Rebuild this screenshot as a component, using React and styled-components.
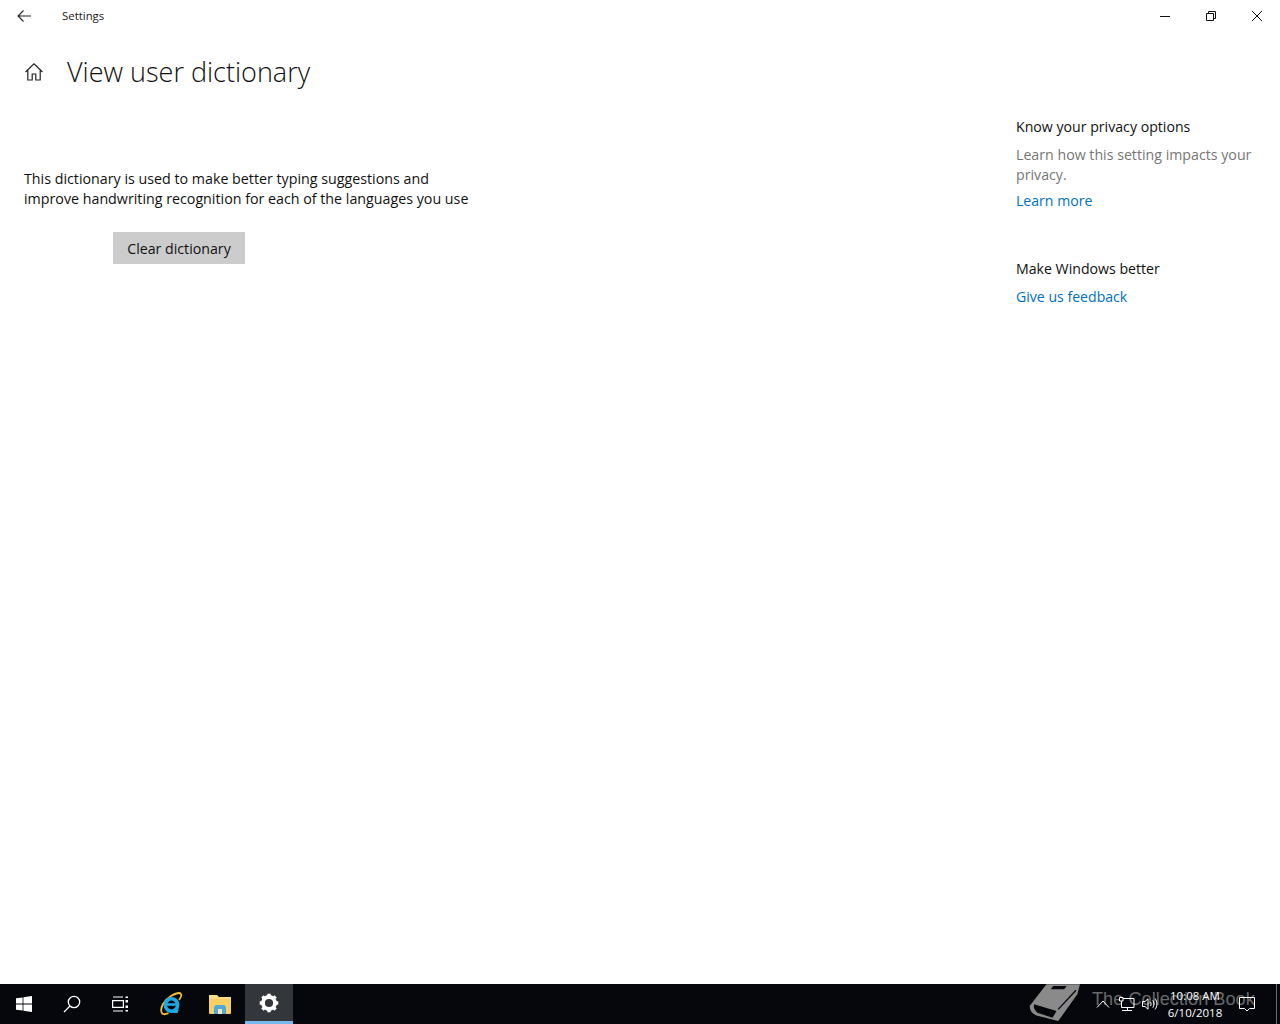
import React from "react";
import styled, { createGlobalStyle } from "styled-components";

const Global = createGlobalStyle`
    html, body {
        margin: 0;
        padding: 0;
        background: #fff;
    }
    body {
        font-family: "Open Sans", "Noto Sans", sans-serif;
    }
`

const Page = styled.div`
    width: 1280px;
    height: 1024px;
    display: flex;
    flex-direction: column;
    overflow: hidden;
`

const TitleBar = styled.div`
    height: 32px;
    display: flex;
    align-items: center;
    flex-shrink: 0;
`

const BackButton = styled.div`
    width: 48px;
    height: 32px;
    display: flex;
    align-items: center;
    justify-content: center;
`

const AppTitle = styled.div`
    margin: 0 0 2px 14px;
    font-size: 11.4px;
    color: #1a1a1a;
    flex: 1;
`

const WindowButton = styled.div`
    width: 46px;
    height: 32px;
    display: flex;
    align-items: center;
    justify-content: center;
`

const Main = styled.div`
    flex: 1;
    display: flex;
    justify-content: space-between;
`

const Content = styled.div`
    padding-left: 24px;
`

const Header = styled.div`
    display: flex;
    align-items: center;
    height: 40px;
    margin-top: 20px;
`

const Title = styled.h1`
    margin: 0 0 2px 23px;
    font-size: 27px;
    font-weight: 300;
    color: #111;
    white-space: nowrap;
`

const Description = styled.p`
    margin: 77px 0 0;
    font-size: 14.25px;
    line-height: 20px;
    color: #111;
    white-space: nowrap;
`

const ClearButton = styled.button`
    display: block;
    margin: 23px 0 0 89px;
    width: 132px;
    height: 32px;
    padding: 0;
    border: 0;
    background: #ccc;
    color: #111;
    font-family: inherit;
    font-size: 14.2px;
`

const Aside = styled.aside`
    width: 264px;
    padding-top: 85px;
`

const AsideSection = styled.section`
    margin-bottom: 48px;
`

const AsideHeading = styled.div`
    font-size: 14.15px;
    line-height: 20px;
    color: #111;
    margin-bottom: 8px;
`

const AsideText = styled.div`
    width: 245px;
    font-size: 14.2px;
    line-height: 20px;
    color: #767676;
    margin-bottom: 6px;
`

const AsideLink = styled.a`
    display: block;
    font-size: 14.1px;
    line-height: 20px;
    color: #0070c0;
`

const TaskBar = styled.div`
    position: relative;
    height: 40px;
    flex-shrink: 0;
    background: #05070c;
    display: flex;
    align-items: stretch;
`

const TaskItem = styled.div`
    width: ${p => p.$width || 48}px;
    padding-left: ${p => p.$inset || 0}px;
    display: flex;
    align-items: center;
    justify-content: center;
    box-sizing: border-box;
    background: ${p => (p.$active ? "#33363a" : "transparent")};
    border-bottom: ${p => (p.$active ? "3px solid #76b9ed" : "0")};
`

const Tray = styled.div`
    margin-left: auto;
    display: flex;
    align-items: center;
    position: relative;
    z-index: 1;
`

const TrayIcon = styled.div`
    width: ${p => p.$width || 24}px;
    display: flex;
    justify-content: center;
    margin-left: ${p => p.$gap || 0}px;
`

const Clock = styled.div`
    width: 74px;
    margin: 0 3px 0 0;
    text-align: center;
    font-size: 11.5px;
    line-height: 17px;
    color: #fff;
`

const ShowDesktop = styled.div`
    width: 1px;
    height: 40px;
    margin: 0 3px 0 17px;
    background: #6b6d70;
`

const Watermark = styled.div`
    position: absolute;
    left: 1028px;
    top: 0;
    height: 40px;
    display: flex;
    color: #68696b;
    font-family: "Liberation Sans", Arial, sans-serif;
    font-size: 18.2px;
    line-height: 30px;
    white-space: nowrap;
    overflow: hidden;
`

const WatermarkText = styled.span`
    margin-left: 12px;
`

const BackIcon = () => <svg width="16" height="16" viewBox="0 0 16 16" fill="none" stroke="#222" strokeWidth="1.1">
    <path d="M2 8h13M7.500 2.500 2 8l5.500 5.500" />
</svg>

const MinimizeIcon = () => <svg width="12" height="12" viewBox="0 0 12 12" stroke="#111" strokeWidth="1">
    <path d="M1 6.500h10" />
</svg>

const RestoreIcon = () => <svg width="12" height="12" viewBox="0 0 12 12" fill="none" stroke="#111" strokeWidth="1">
    <path d="M1.500 3.500h7v7h-7zM3.500 3.500v-2h7v7h-2" />
</svg>

const CloseIcon = () => <svg width="12" height="12" viewBox="0 0 12 12" stroke="#111" strokeWidth="1">
    <path d="M1 1l10 10M11 1 1 11" />
</svg>

const HomeIcon = () => <svg width="20" height="20" viewBox="0 0 20 20" fill="none" stroke="#222" strokeWidth="1.2">
    <path d="M1.500 10 10 1.800 18.500 10M3.800 8v10h4.400v-6h3.600v6h4.400V8" />
</svg>

const WindowsLogo = () => <svg width="16" height="16" viewBox="0 0 16 16" fill="#fff">
    <path d="M0 2.300 6.600 1.400v6.100H0zM7.400 1.300 16 0v7.500H7.400zM0 8.400h6.600v6.200L0 13.700zM7.400 8.400H16V16l-8.600-1.300z" />
</svg>

const SearchIcon = () => <svg width="18" height="18" viewBox="0 0 18 18" fill="none" stroke="#fff" strokeWidth="1.300">
    <circle cx="11" cy="7" r="5.700" />
    <path d="M7 11 1 17" />
</svg>

const TaskViewIcon = () => <svg width="16" height="16" viewBox="0 0 16 16" fill="none" stroke="#fff" strokeWidth="1.200">
    <path d="M.6 4.600h10.800v6.800H.6zM1 1h10M1 15h10" />
    <path d="M13.500.4H16v1.700h-2.500zM13.500 4H16v2.500h-2.500zM13.500 9.500H16V12h-2.500zM13.500 13.900H16v1.700h-2.500z" fill="#fff" stroke="none" />
</svg>

const EdgeIcon = () => <svg width="24" height="24" viewBox="0 0 24 24" fill="none">
    <path d="M2.500 20C1 16 5 8 12 4c5-3 9-3.500 10-2 1 1.300-.5 4-2 6" stroke="#f0c030" strokeWidth="1.800" />
    <path d="M2.500 20c.5 2.500 3 3 7 1" stroke="#f0c030" strokeWidth="1.800" />
    <circle cx="12.500" cy="13" r="6.200" stroke="#1ea7e1" strokeWidth="3.600" />
    <path d="M6 12.500h13.500" stroke="#1ea7e1" strokeWidth="2.600" />
    <path d="M15 17.500h5l-1.500 3.500h-5z" fill="#1ea7e1" />
</svg>

const ExplorerIcon = () => <svg width="22" height="19" viewBox="0 0 22 19">
    <path d="M0 0h8l2 2h12v4H0z" fill="#f7dd84" />
    <path d="M0 4h22v14a1 1 0 0 1-1 1H1a1 1 0 0 1-1-1z" fill="#f8cf62" />
    <path d="M5 13a3 3 0 0 1 3-3h6a3 3 0 0 1 3 3v6H5z" fill="#4fa8dc" />
    <path d="M9 14h4v5H9z" fill="#f8e7ae" />
</svg>

const GearIcon = () => <svg width="20" height="20" viewBox="0 0 20 20" fill="none" stroke="#fff">
    <circle cx="10" cy="10" r="6" strokeWidth="3.800" />
    <path d="M10 .7v3M10 16.300v3M.7 10h3M16.300 10h3M3.400 3.400l2.200 2.200M14.400 14.400l2.200 2.200M16.600 3.400l-2.200 2.200M5.600 14.400l-2.200 2.200" strokeWidth="3.400" />
</svg>

const BookIcon = () => <svg width="52" height="38" viewBox="0 0 155 112" style={{ flexShrink: 0 }}>
    <path d="M5 65 55 0h100l-8 30-57 80-65-17Q5 85 5 65z" fill="#8a8a8a" />
    <path d="M18 60l67 20-12 20-45-15Q15 75 18 60z" fill="#05070c" />
    <path d="M90 75 143 18" stroke="#05070c" strokeWidth="4" fill="none" />
    <path d="M75 5h40l-7 10H68z" fill="#05070c" />
</svg>

const ChevronIcon = () => <svg width="14" height="8" viewBox="0 0 14 8" fill="none" stroke="#fff">
    <path d="M1 7.500 7 1l6 6.500" />
</svg>

const NetworkIcon = () => <svg width="16" height="14" viewBox="0 0 16 14" fill="none" stroke="#fff">
    <path d="M2.500 1.500h12.500v9H2.500zM8.500 10.500v3M3 13.500h10" />
    <path d="M.5.500h3.500v3.500H.5z" fill="#05070c" />
</svg>

const VolumeIcon = () => <svg width="16" height="12" viewBox="0 0 16 12" fill="none" stroke="#fff">
    <path d="M.5 3.500h2.500L6 .8v10.400L3 8.500H.5zM8.500 4c.8 1.300.8 2.700 0 4M10.800 2.300c1.600 2.200 1.600 5.200 0 7.400M13 .5c2.500 3.200 2.500 7.800 0 11" />
</svg>

const NotificationIcon = () => <svg width="16" height="15" viewBox="0 0 16 15" fill="none" stroke="#fff">
    <path d="M.5.500h15v11h-5L8 14l-2.500-2.500h-5z" />
</svg>

const App = () => {
    return <Page>
        <Global />
        <TitleBar>
            <BackButton><BackIcon /></BackButton>
            <AppTitle>Settings</AppTitle>
            <WindowButton><MinimizeIcon /></WindowButton>
            <WindowButton><RestoreIcon /></WindowButton>
            <WindowButton><CloseIcon /></WindowButton>
        </TitleBar>
        <Main>
            <Content>
                <Header>
                    <HomeIcon />
                    <Title>View user dictionary</Title>
                </Header>
                <Description>
                    This dictionary is used to make better typing suggestions and<br />
                    improve handwriting recognition for each of the languages you use
                </Description>
                <ClearButton>Clear dictionary</ClearButton>
            </Content>
            <Aside>
                <AsideSection>
                    <AsideHeading>Know your privacy options</AsideHeading>
                    <AsideText>Learn how this setting impacts your privacy.</AsideText>
                    <AsideLink>Learn more</AsideLink>
                </AsideSection>
                <AsideSection>
                    <AsideHeading>Make Windows better</AsideHeading>
                    <AsideLink>Give us feedback</AsideLink>
                </AsideSection>
            </Aside>
        </Main>
        <TaskBar>
            <TaskItem><WindowsLogo /></TaskItem>
            <TaskItem><SearchIcon /></TaskItem>
            <TaskItem><TaskViewIcon /></TaskItem>
            <TaskItem $width={50} $inset={4}><EdgeIcon /></TaskItem>
            <TaskItem $width={51}><ExplorerIcon /></TaskItem>
            <TaskItem $active><GearIcon /></TaskItem>
            <Watermark>
                <BookIcon />
                <WatermarkText>The Collection Book</WatermarkText>
            </Watermark>
            <Tray>
                <TrayIcon><ChevronIcon /></TrayIcon>
                <TrayIcon><NetworkIcon /></TrayIcon>
                <TrayIcon $width={16} $gap={3}><VolumeIcon /></TrayIcon>
                <Clock>10:08 AM<br />6/10/2018</Clock>
                <TrayIcon><NotificationIcon /></TrayIcon>
                <ShowDesktop />
            </Tray>
        </TaskBar>
    </Page>
}

export default App
